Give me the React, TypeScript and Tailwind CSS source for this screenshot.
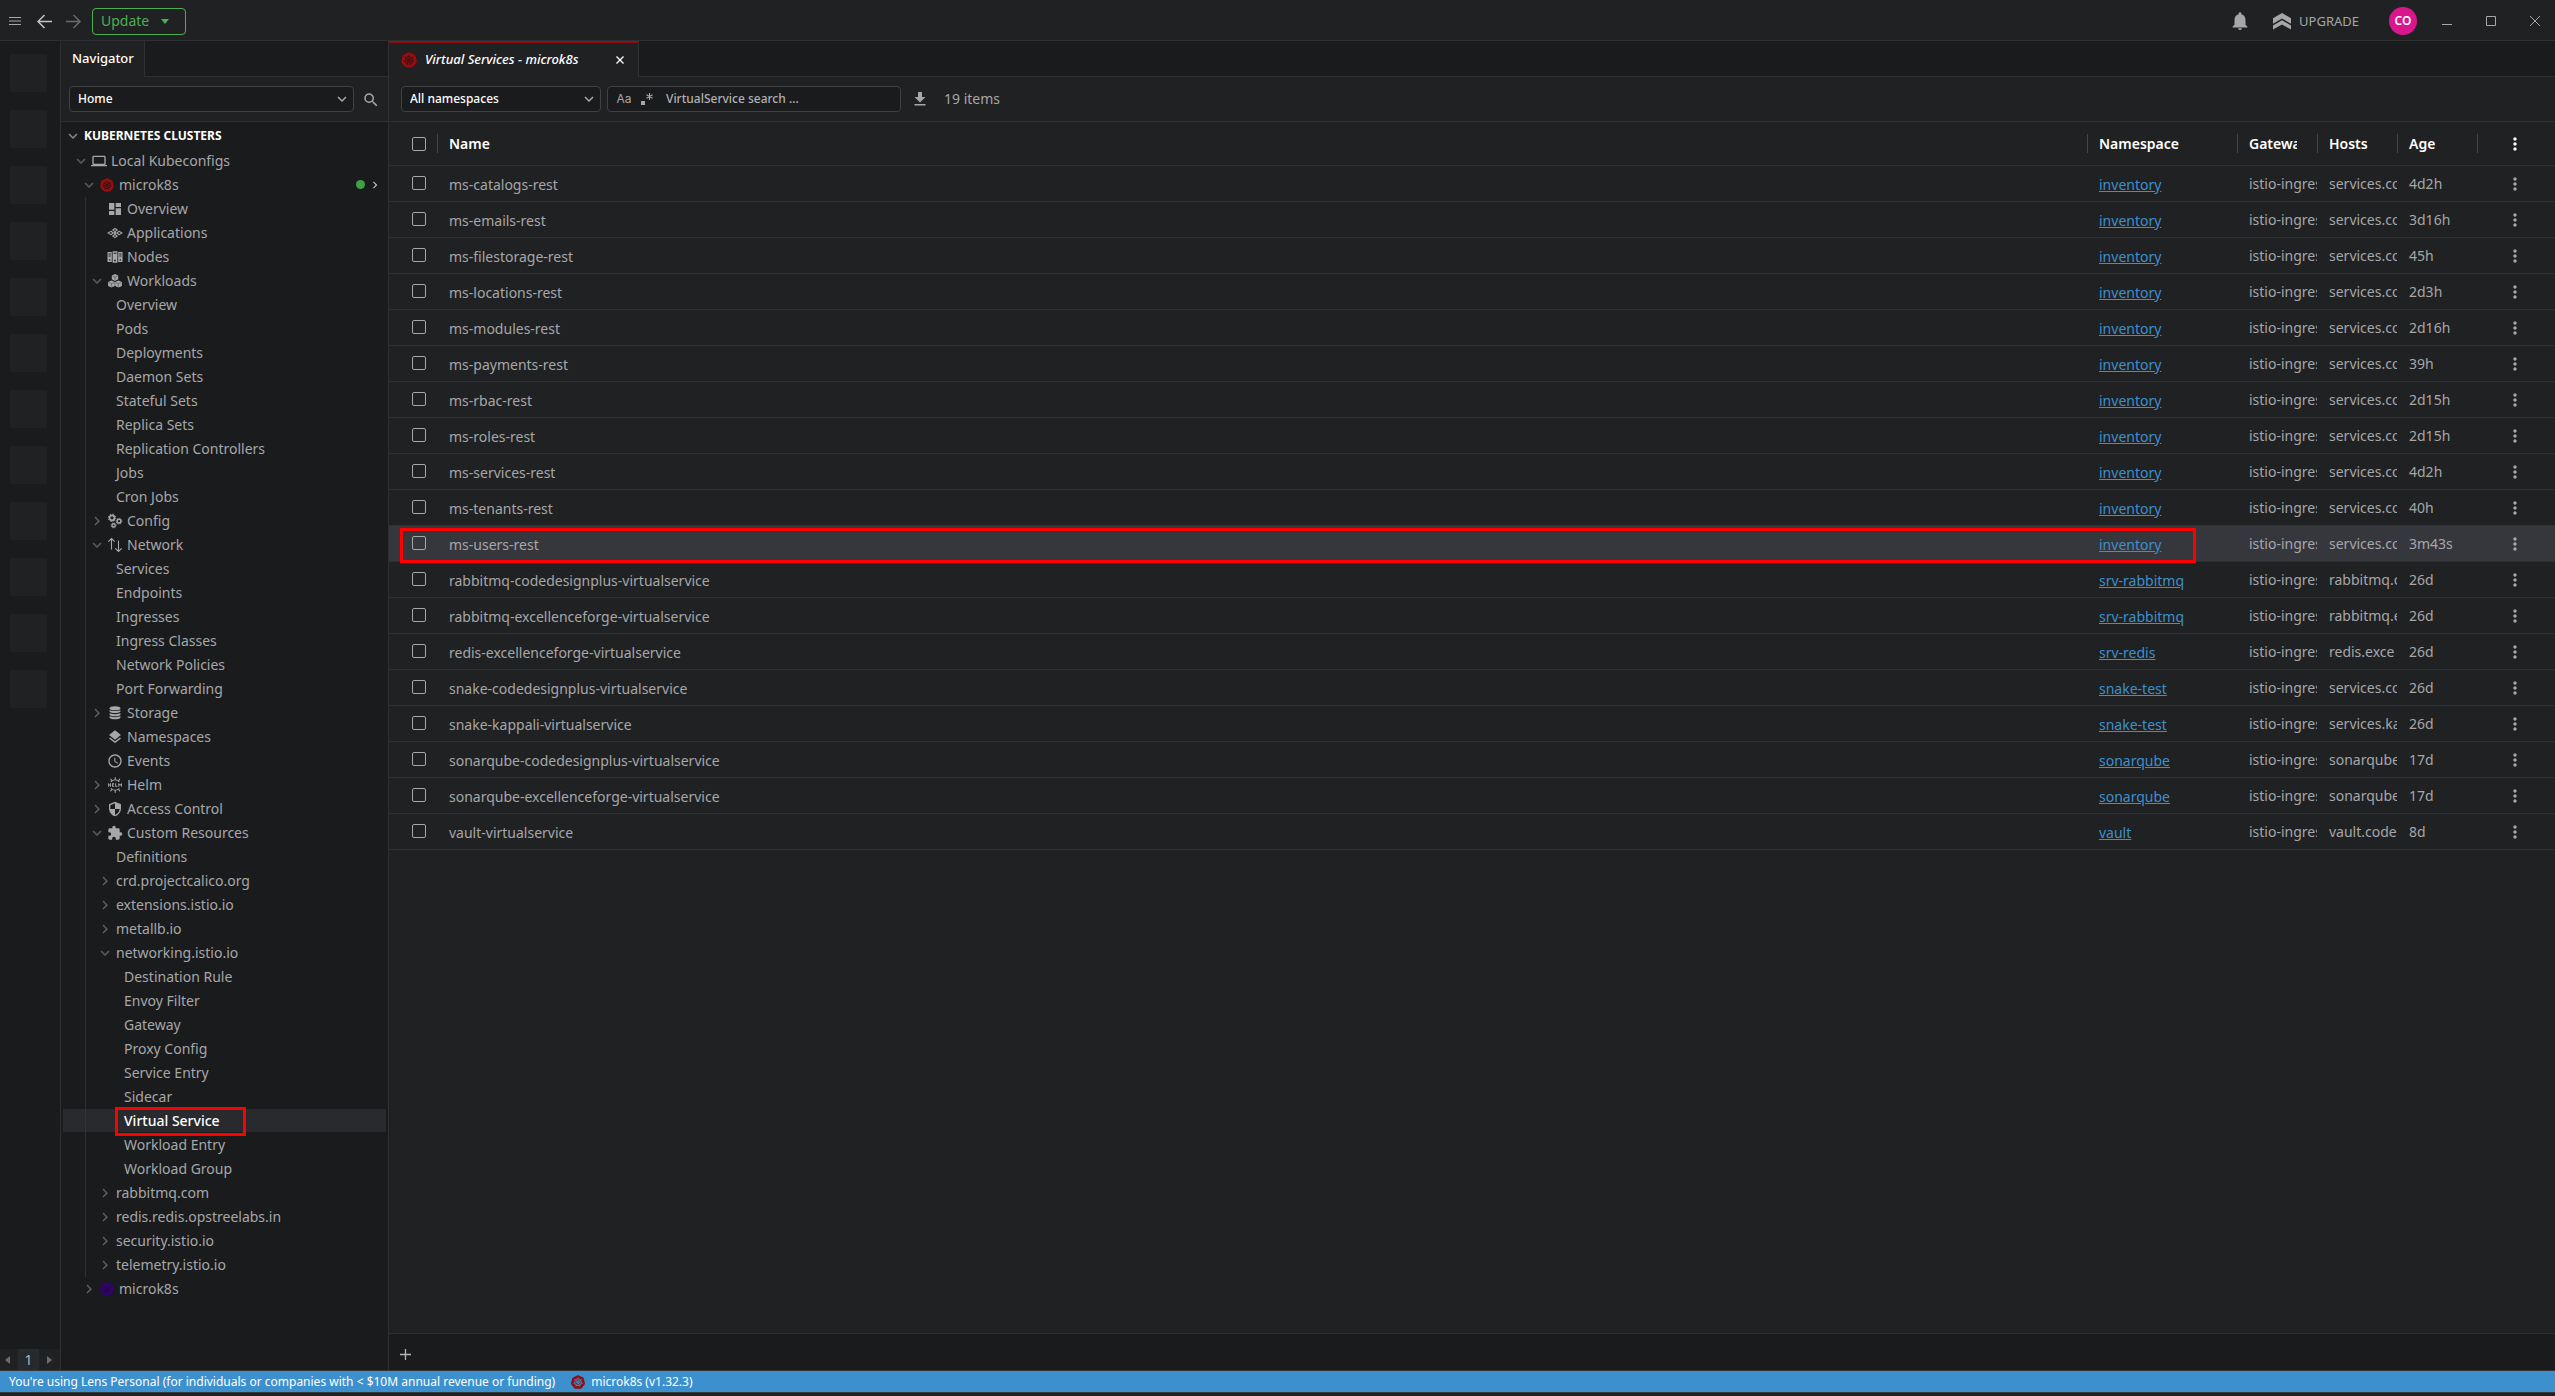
import React from "react";
import {
  MdAccessTime,
  MdDashboard,
  MdExpandMore,
  MdChevronRight,
  MdExtension,
  MdLaptop,
  MdLayers,
  MdMoreVert,
  MdNotifications,
  MdSearch,
  MdSecurity,
} from "react-icons/md";
import { SiHelm, SiKubernetes } from "react-icons/si";

type IconName =
  | "laptop"
  | "k8s-red"
  | "k8s-purple"
  | "dashboard"
  | "applications"
  | "nodes"
  | "workloads"
  | "config"
  | "network"
  | "storage"
  | "namespaces"
  | "events"
  | "helm"
  | "access"
  | "custom";

type Node = {
  label: string;
  depth: number;
  state?: "open" | "closed";
  icon?: IconName;
  selected?: boolean;
};

const ApplicationsIcon = () => (
  <svg viewBox="0 0 16 16" className="size-4 shrink-0" fill="none" stroke="currentColor" strokeWidth="1.1">
    <path d="M8 3.400 10.200 5 8 6.600 5.800 5Z" />
    <path d="M8 9.400 10.200 11 8 12.600 5.800 11Z" />
    <path d="M8 6.700 9.800 8 8 9.300 6.200 8Z" fill="currentColor" stroke="none" />
    <path d="M4 6.300 6.200 8 4 9.700 1 8Z" />
    <path d="M12 6.300 15 8l-3 1.700L9.800 8Z" />
  </svg>
);

const NodesIcon = () => (
  <svg viewBox="0 0 16 16" className="size-4 shrink-0" fill="currentColor" fillRule="evenodd">
    <path d="M.5 3h4.300v10H.5ZM1.500 4.400v1h2.300v-1ZM1.500 6.600v1h2.300v-1ZM2 10.200v1.400h1.300v-1.400Z" />
    <path d="M5.600 2.200h4.800v11.600H5.600ZM6.600 3.800v1h2.800v-1ZM7.200 10.800v1.400h1.600v-1.400Z" />
    <path d="M11.200 3h4.300v10h-4.300ZM12.200 4.400v1h2.300v-1ZM12.200 6.600v1h2.300v-1ZM12.700 10.200v1.400H14v-1.400Z" />
  </svg>
);

const WorkloadsIcon = () => (
  <svg viewBox="0 0 16 16" className="size-4 shrink-0" fill="currentColor">
    <path d="M8 1 11.200 2.500V6.200L8 7.900 4.800 6.200V2.500Z" />
    <path d="M4.500 7.500 7.800 9.100v3.800L4.500 14.600l-3.400-1.700V9.100Z" />
    <path d="M11.500 7.500l3.400 1.600v3.800l-3.400 1.700-3.300-1.700V9.100Z" />
    <path
      d="M5.600 3.100 8 4.200l2.400-1.100M8 4.200V7M2.200 9.600l2.400 1.100L7 9.600M4.600 10.700v2.900M9 9.600l2.400 1.100 2.400-1.100M11.400 10.700v2.900"
      className="stroke-[#1a1b1d]"
      strokeWidth=".4"
      fill="none"
    />
  </svg>
);

const ConfigIcon = () => (
  <svg viewBox="0 0 16 16" className="size-4 shrink-0" fill="none" stroke="currentColor">
    <circle cx="5" cy="4.800" r="2.500" strokeWidth="1.700" />
    <circle cx="5" cy="4.800" r="3.700" strokeWidth="1" strokeDasharray="1.450 1.456" />
    <circle cx="12" cy="8.200" r="1.900" strokeWidth="1.500" />
    <circle cx="12" cy="8.200" r="2.900" strokeWidth=".8" strokeDasharray="1.140 1.140" />
    <circle cx="6.600" cy="12.400" r="1.600" strokeWidth="1.400" />
    <circle cx="6.600" cy="12.400" r="2.500" strokeWidth=".8" strokeDasharray=".98 .98" />
  </svg>
);

const NetworkIcon = () => (
  <svg viewBox="0 0 16 16" className="size-4 shrink-0" fill="none" stroke="currentColor" strokeWidth="1.100">
    <path d="M4.500 12.500V1.500M1.300 4.700 4.500 1.500 7.700 4.700M11.500 3.500v11M8.300 11.300l3.200 3.200 3.200-3.200" />
  </svg>
);

const StorageIcon = () => (
  <svg viewBox="0 0 16 16" className="size-4 shrink-0" fill="currentColor">
    <ellipse cx="8" cy="3.200" rx="5.400" ry="2" />
    <path d="M2.600 4.900c1.500 1.500 9.300 1.500 10.800 0v1.900c-1.500 1.700-9.300 1.700-10.800 0Z" />
    <path d="M2.600 8c1.500 1.500 9.300 1.500 10.800 0v1.900c-1.500 1.700-9.300 1.700-10.800 0Z" />
    <path d="M2.600 11.100c1.500 1.500 9.300 1.500 10.800 0v1.700c-1.500 2-9.300 2-10.800 0Z" />
  </svg>
);

function TreeIcon({ name }: { name: IconName }) {
  const cls = "size-4 shrink-0";
  switch (name) {
    case "laptop":
      return <MdLaptop className={cls} />;
    case "k8s-red":
      return <SiKubernetes className="mx-px size-3.5 shrink-0 rounded-full bg-[#3a1012] text-[#960f12]" />;
    case "k8s-purple":
      return <SiKubernetes className="mx-px size-3.5 shrink-0 rounded-full bg-[#220a45] text-[#33046b]" />;
    case "dashboard":
      return <MdDashboard className={cls} />;
    case "applications":
      return <ApplicationsIcon />;
    case "nodes":
      return <NodesIcon />;
    case "workloads":
      return <WorkloadsIcon />;
    case "config":
      return <ConfigIcon />;
    case "network":
      return <NetworkIcon />;
    case "storage":
      return <StorageIcon />;
    case "namespaces":
      return <MdLayers className={cls} />;
    case "events":
      return <MdAccessTime className={cls} />;
    case "helm":
      return <SiHelm className={cls} />;
    case "access":
      return <MdSecurity className={cls} />;
    case "custom":
      return <MdExtension className={cls} />;
  }
}

const leaf = (depth: number, ...labels: string[]): Node[] => labels.map((label) => ({ label, depth }));

const clusterNodes: Node[] = [
  { label: "Overview", depth: 3, icon: "dashboard" },
  { label: "Applications", depth: 3, icon: "applications" },
  { label: "Nodes", depth: 3, icon: "nodes" },
  { label: "Workloads", depth: 3, icon: "workloads", state: "open" },
  ...leaf(
    4,
    "Overview",
    "Pods",
    "Deployments",
    "Daemon Sets",
    "Stateful Sets",
    "Replica Sets",
    "Replication Controllers",
    "Jobs",
    "Cron Jobs",
  ),
  { label: "Config", depth: 3, icon: "config", state: "closed" },
  { label: "Network", depth: 3, icon: "network", state: "open" },
  ...leaf(4, "Services", "Endpoints", "Ingresses", "Ingress Classes", "Network Policies", "Port Forwarding"),
  { label: "Storage", depth: 3, icon: "storage", state: "closed" },
  { label: "Namespaces", depth: 3, icon: "namespaces" },
  { label: "Events", depth: 3, icon: "events" },
  { label: "Helm", depth: 3, icon: "helm", state: "closed" },
  { label: "Access Control", depth: 3, icon: "access", state: "closed" },
  { label: "Custom Resources", depth: 3, icon: "custom", state: "open" },
  { label: "Definitions", depth: 4 },
  { label: "crd.projectcalico.org", depth: 4, state: "closed" },
  { label: "extensions.istio.io", depth: 4, state: "closed" },
  { label: "metallb.io", depth: 4, state: "closed" },
  { label: "networking.istio.io", depth: 4, state: "open" },
  ...leaf(5, "Destination Rule", "Envoy Filter", "Gateway", "Proxy Config", "Service Entry", "Sidecar"),
  { label: "Virtual Service", depth: 5, selected: true },
  ...leaf(5, "Workload Entry", "Workload Group"),
  { label: "rabbitmq.com", depth: 4, state: "closed" },
  { label: "redis.redis.opstreelabs.in", depth: 4, state: "closed" },
  { label: "security.istio.io", depth: 4, state: "closed" },
  { label: "telemetry.istio.io", depth: 4, state: "closed" },
];

const indent = ["pl-0", "pl-2", "pl-4", "pl-6", "pl-8", "pl-10"];

function TreeRow({ node, online }: { node: Node; online?: boolean }) {
  return (
    <li className="h-6">
      <div
        className={
          "relative mx-0.5 flex h-[23px] items-center " +
          indent[node.depth] +
          (node.selected ? " bg-[#292a2e] text-white" : " text-[#a6a7a9]")
        }
      >
        <span className="flex w-5 shrink-0 justify-center text-[#5c5e61]">
          {node.state === "open" && <MdExpandMore className="size-[18px]" />}
          {node.state === "closed" && <MdChevronRight className="size-[18px]" />}
        </span>
        {node.icon && (
          <span className="mr-[3px] flex">
            <TreeIcon name={node.icon} />
          </span>
        )}
        <a href="#" className={"pl-px whitespace-nowrap " + (node.selected ? "font-medium" : "")}>
          {node.label}
        </a>
        {node.selected && (
          <span className="absolute -top-0.5 left-[52px] h-[29px] w-[131px] border-3 border-[#fe0000]" />
        )}
        {online && (
          <span className="mr-1 ml-auto flex items-center gap-[3px]">
            <span className="size-[9px] rounded-full bg-[#43a047]" />
            <button type="button" aria-label="Cluster menu" className="text-[#c0c1c3]">
              <MdChevronRight className="size-3.5" />
            </button>
          </span>
        )}
      </div>
    </li>
  );
}

type Row = [name: string, namespace: string, host: string, age: string];

const rows: Row[] = [
  ["ms-catalogs-rest", "inventory", "services.co", "4d2h"],
  ["ms-emails-rest", "inventory", "services.co", "3d16h"],
  ["ms-filestorage-rest", "inventory", "services.co", "45h"],
  ["ms-locations-rest", "inventory", "services.co", "2d3h"],
  ["ms-modules-rest", "inventory", "services.co", "2d16h"],
  ["ms-payments-rest", "inventory", "services.co", "39h"],
  ["ms-rbac-rest", "inventory", "services.co", "2d15h"],
  ["ms-roles-rest", "inventory", "services.co", "2d15h"],
  ["ms-services-rest", "inventory", "services.co", "4d2h"],
  ["ms-tenants-rest", "inventory", "services.co", "40h"],
  ["ms-users-rest", "inventory", "services.co", "3m43s"],
  ["rabbitmq-codedesignplus-virtualservice", "srv-rabbitmq", "rabbitmq.c", "26d"],
  ["rabbitmq-excellenceforge-virtualservice", "srv-rabbitmq", "rabbitmq.e", "26d"],
  ["redis-excellenceforge-virtualservice", "srv-redis", "redis.exce", "26d"],
  ["snake-codedesignplus-virtualservice", "snake-test", "services.co", "26d"],
  ["snake-kappali-virtualservice", "snake-test", "services.ka", "26d"],
  ["sonarqube-codedesignplus-virtualservice", "sonarqube", "sonarqube", "17d"],
  ["sonarqube-excellenceforge-virtualservice", "sonarqube", "sonarqube", "17d"],
  ["vault-virtualservice", "vault", "vault.code", "8d"],
];

function Check({ label }: { label: string }) {
  return (
    <input
      type="checkbox"
      aria-label={label}
      className="ml-[23px] block size-3.5 appearance-none rounded-xs border border-[#a6a7a9] bg-transparent"
    />
  );
}

function HeadCell({ children, clip }: { children?: React.ReactNode; clip?: boolean }) {
  return (
    <th scope="col" className="h-11 border-b border-[#2e3033] p-0 text-left font-semibold text-white">
      <div className="flex h-[19px] items-center border-l border-[#43454a] pl-[11px]">
        <span className={"overflow-hidden whitespace-nowrap " + (clip ? "w-12" : "")}>{children}</span>
      </div>
    </th>
  );
}

function ServicesTable() {
  const cell = "h-9 border-b border-[#2e3033] p-0 pl-3 whitespace-nowrap";
  return (
    <table className="w-full table-fixed border-separate border-spacing-0 text-sm text-[#a6a7a9]">
      <colgroup>
        <col className="w-12" />
        <col />
        <col className="w-[150px]" />
        <col className="w-20" />
        <col className="w-20" />
        <col className="w-20" />
        <col className="w-[78px]" />
      </colgroup>
      <thead>
        <tr>
          <th className="h-11 border-b border-[#2e3033] p-0">
            <Check label="Select all" />
          </th>
          <HeadCell>Name</HeadCell>
          <HeadCell>Namespace</HeadCell>
          <HeadCell clip>Gateway</HeadCell>
          <HeadCell>Hosts</HeadCell>
          <HeadCell>Age</HeadCell>
          <th className="h-11 border-b border-[#2e3033] p-0 text-white">
            <div className="flex h-[19px] items-center border-l border-[#43454a] pl-[27px]">
              <button type="button" aria-label="Columns">
                <MdMoreVert className="block size-5" />
              </button>
            </div>
          </th>
        </tr>
      </thead>
      <tbody>
        {rows.map(([name, namespace, host, age]) => (
          <tr key={name} className={name === "ms-users-rest" ? "bg-[#36373d]" : ""}>
            <td className="relative h-9 border-b border-[#2e3033] p-0 pb-0.5">
              <Check label={"Select " + name} />
              {name === "ms-users-rest" && (
                <span className="pointer-events-none absolute top-0.5 left-[11px] h-[35px] w-[calc(100vw-759px)] border-3 border-[#fe0000]" />
              )}
            </td>
            <td className={cell + " pt-0.5"}>{name}</td>
            <td className={cell + " pt-0.5"}>
              <a href="#" className="text-[#3d90ce] underline">
                {namespace}
              </a>
            </td>
            <td className={cell}>
              <div className="overflow-hidden">istio-ingres</div>
            </td>
            <td className={cell}>
              <div className="overflow-hidden">{host}</div>
            </td>
            <td className={cell}>{age}</td>
            <td className="h-9 border-b border-[#2e3033] p-0 pl-7">
              <button type="button" aria-label={"Actions for " + name} className="block">
                <MdMoreVert className="block size-5" />
              </button>
            </td>
          </tr>
        ))}
      </tbody>
    </table>
  );
}

function TitleBar() {
  return (
    <header className="flex h-[41px] shrink-0 items-center border-b border-[#2e3033] pt-0.5 text-[#a6a7a9]">
      <button type="button" aria-label="Menu" className="ml-[9px]">
        <svg viewBox="0 0 12 8" className="h-2 w-3" stroke="currentColor">
          <path d="M0 .5h12M0 4h12M0 7.500h12" />
        </svg>
      </button>
      <button type="button" aria-label="Back" className="ml-4 text-[#c4c5c7]">
        <svg viewBox="0 0 15 15" className="size-[15px]" fill="none" stroke="currentColor" strokeWidth="1.5">
          <path d="M15 7.500H1.200M7.500 1 1 7.500 7.500 14" />
        </svg>
      </button>
      <button type="button" aria-label="Forward" className="ml-3.5 text-[#6b6c6f]">
        <svg viewBox="0 0 15 15" className="size-[15px]" fill="none" stroke="currentColor" strokeWidth="1.5">
          <path d="M0 7.500h13.800M7.500 1 14 7.500 7.500 14" />
        </svg>
      </button>
      <button
        type="button"
        className="ml-[11px] flex h-[27px] w-[94px] items-center rounded-sm border border-[#4caf50] pl-2 text-sm text-[#4caf50]"
      >
        Update
        <svg viewBox="0 0 8 5" className="ml-3 h-[5px] w-2" fill="currentColor">
          <path d="M0 0h8L4 5Z" />
        </svg>
      </button>
      <button type="button" aria-label="Notifications" className="ml-auto">
        <MdNotifications className="size-[22px]" />
      </button>
      <button type="button" className="ml-[22px] flex items-center gap-2 text-[13px]">
        <svg viewBox="0 0 18 17" className="h-[17px] w-[18px]" fill="currentColor">
          <path d="M9 0 18 5.200V10.800L9 5.600 0 10.800V5.200Z" />
          <path d="M9 7.200 18 12.400V16.600L13.500 14 9 11.400 4.500 14 0 16.600V12.400Z" />
        </svg>
        UPGRADE
      </button>
      <button
        type="button"
        aria-label="Account"
        className="ml-[30px] flex size-7 items-center justify-center rounded-full bg-[#d9168c] text-xs font-semibold text-white"
      >
        CO
      </button>
      <div className="mr-[15px] ml-[25px] flex gap-[34px]">
        <button type="button" aria-label="Minimize">
          <svg viewBox="0 0 10 10" className="size-2.5" stroke="currentColor">
            <path d="M0 8.500h10" />
          </svg>
        </button>
        <button type="button" aria-label="Maximize">
          <svg viewBox="0 0 10 10" className="size-2.5" fill="none" stroke="currentColor">
            <path d="M.5.5h9v9h-9Z" />
          </svg>
        </button>
        <button type="button" aria-label="Close window">
          <svg viewBox="0 0 10 10" className="size-2.5" stroke="currentColor">
            <path d="m0 0 10 10M10 0 0 10" />
          </svg>
        </button>
      </div>
    </header>
  );
}

function Picker({ label, value, className }: { label: string; value: string; className: string }) {
  return (
    <div className={"relative flex h-[26px] " + className}>
      <select
        aria-label={label}
        className="w-full appearance-none rounded-sm border border-[#3f4145] bg-[#1a1b1d] px-2 text-xs font-medium text-white"
      >
        <option>{value}</option>
      </select>
      <MdExpandMore className="pointer-events-none absolute top-1 right-[3px] size-[18px] text-[#a6a7a9]" />
    </div>
  );
}

function Rail() {
  return (
    <aside className="flex w-[61px] shrink-0 flex-col border-r border-[#2e3033] bg-[#1a1b1d]">
      <div className="flex flex-col gap-[18px] pt-[13px] pl-2.5">
        {Array.from({ length: 12 }, (_, i) => (
          <div key={i} className="h-[38px] w-[37px] bg-[#202123]" />
        ))}
      </div>
      <div className="mt-auto flex h-[21px] items-stretch bg-[#202123] text-[#6b6c6f]">
        <button type="button" aria-label="Previous" className="flex w-[18px] items-center pl-[5px]">
          <svg viewBox="0 0 5 8" className="h-2 w-[5px]" fill="currentColor">
            <path d="M5 0v8L0 4Z" />
          </svg>
        </button>
        <span className="w-[21px] bg-[#272a2d] text-center text-sm/[21px] text-[#b4b5b7]">1</span>
        <button type="button" aria-label="Next" className="flex grow items-center pl-2">
          <svg viewBox="0 0 5 8" className="h-2 w-[5px]" fill="currentColor">
            <path d="M0 0v8l5-4Z" />
          </svg>
        </button>
      </div>
    </aside>
  );
}

function Navigator() {
  return (
    <nav className="flex w-[328px] shrink-0 flex-col border-r border-[#2e3033] bg-[#1a1b1d]">
      <div className="flex h-9 shrink-0">
        <button
          type="button"
          className="w-[84px] border-r border-[#2e3033] bg-[#202123] pb-0.5 pl-[11px] text-left text-[13px] font-medium text-white"
        >
          Navigator
        </button>
        <div className="grow border-b border-[#2e3033]" />
      </div>
      <div className="flex h-[45px] shrink-0 items-center border-b border-[#2e3033] bg-[#202123] pl-2">
        <Picker label="View" value="Home" className="w-[285px]" />
        <button type="button" aria-label="Search" className="mt-0.5 ml-2 text-[#a6a7a9]">
          <MdSearch className="size-[18px]" />
        </button>
      </div>
      <h2 className="flex h-[27px] shrink-0 items-center text-xs font-bold text-white">
        <span className="flex w-[23px] justify-center text-[#87898c]">
          <MdExpandMore className="size-[18px]" />
        </span>
        KUBERNETES CLUSTERS
      </h2>
      <ul className="text-sm">
        <TreeRow node={{ label: "Local Kubeconfigs", depth: 1, icon: "laptop", state: "open" }} />
        <TreeRow node={{ label: "microk8s", depth: 2, icon: "k8s-red", state: "open" }} online />
        <li className="relative">
          <ul>
            {clusterNodes.map((node, i) => (
              <TreeRow key={i} node={node} />
            ))}
          </ul>
          <span className="pointer-events-none absolute inset-y-0 left-6 w-px bg-[#8b1013]/80" />
        </li>
        <TreeRow node={{ label: "microk8s", depth: 2, icon: "k8s-purple", state: "closed" }} />
      </ul>
    </nav>
  );
}

function Workspace() {
  return (
    <main className="flex min-w-0 grow flex-col">
      <div className="flex h-9 shrink-0 bg-[#1a1b1d]">
        <div className="flex w-[250px] items-center border-t-2 border-r border-t-[#8f0d10] border-r-[#2e3033] bg-[#202123] pl-3 text-white">
          <SiKubernetes className="size-4 rounded-full bg-[#3a1012] text-[#960f12]" />
          <span className="ml-2 pb-0.5 text-[13px] font-medium italic">Virtual Services - microk8s</span>
          <button type="button" aria-label="Close tab" className="mr-3.5 ml-auto">
            <svg viewBox="0 0 8 8" className="size-2" stroke="currentColor" strokeWidth="1.3">
              <path d="m.5.5 7 7M7.500.5l-7 7" />
            </svg>
          </button>
        </div>
        <div className="grow border-b border-[#2e3033]" />
      </div>
      <div className="flex h-[45px] shrink-0 items-center border-b border-[#2e3033] pl-3 text-[#a6a7a9]">
        <Picker label="Namespaces" value="All namespaces" className="w-50" />
        <div className="ml-1.5 flex h-[26px] w-[294px] items-center rounded-sm border border-[#3f4145] bg-[#1a1b1d] pl-2">
          <button type="button" aria-label="Match case" className="w-4 font-[Inter] text-xs">
            Aa
          </button>
          <button type="button" aria-label="Use regular expression" className="ml-2">
            <svg viewBox="0 0 14 14" className="size-3.5" fill="none" stroke="currentColor" strokeWidth="1.1">
              <path d="M9.500 1v7M6.500 2.800l6 3.400M12.500 2.800l-6 3.400" />
              <path d="M1 9h4v4H1Z" fill="currentColor" stroke="none" />
            </svg>
          </button>
          <input
            type="text"
            aria-label="Search virtual services"
            placeholder="VirtualService search ..."
            className="ml-3 min-w-0 grow bg-transparent text-xs font-medium outline-none placeholder:text-[#b0b1b3]"
          />
        </div>
        <button type="button" aria-label="Download" className="ml-[13px]">
          <svg viewBox="0 0 12 14" className="h-3.5 w-3" fill="currentColor">
            <path d="M4 0h4v5h3.500L6 10.500.5 5H4ZM.5 12h11v1.500H.5Z" />
          </svg>
        </button>
        <span className="ml-[18px] text-sm">19 items</span>
      </div>
      <ServicesTable />
      <div className="mt-auto flex h-[37px] shrink-0 items-center border-t border-[#2e3033] bg-[#1a1b1d] pl-[11px]">
        <button type="button" aria-label="New tab" className="text-[#b4b5b7]">
          <svg viewBox="0 0 11 11" className="mt-1 size-[11px]" stroke="currentColor" strokeWidth="1.300">
            <path d="M5.500 0v11M0 5.500h11" />
          </svg>
        </button>
      </div>
    </main>
  );
}

export default function App() {
  return (
    <div className="flex h-screen flex-col overflow-hidden bg-[#202123] font-['Noto_Sans','Open_Sans',sans-serif] text-sm">
      <TitleBar />
      <div className="flex min-h-0 grow">
        <Rail />
        <Navigator />
        <Workspace />
      </div>
      <footer className="mb-[3px] flex h-[23px] shrink-0 items-center border-y border-[#33363a] bg-[#3d90ce] pl-[9px] text-xs text-white">
        <span>You're using Lens Personal (for individuals or companies with &lt; $10M annual revenue or funding)</span>
        <SiKubernetes className="mr-1.5 ml-4 size-3.5 text-[#8f0d10]" />
        <span>microk8s (v1.32.3)</span>
      </footer>
    </div>
  );
}
